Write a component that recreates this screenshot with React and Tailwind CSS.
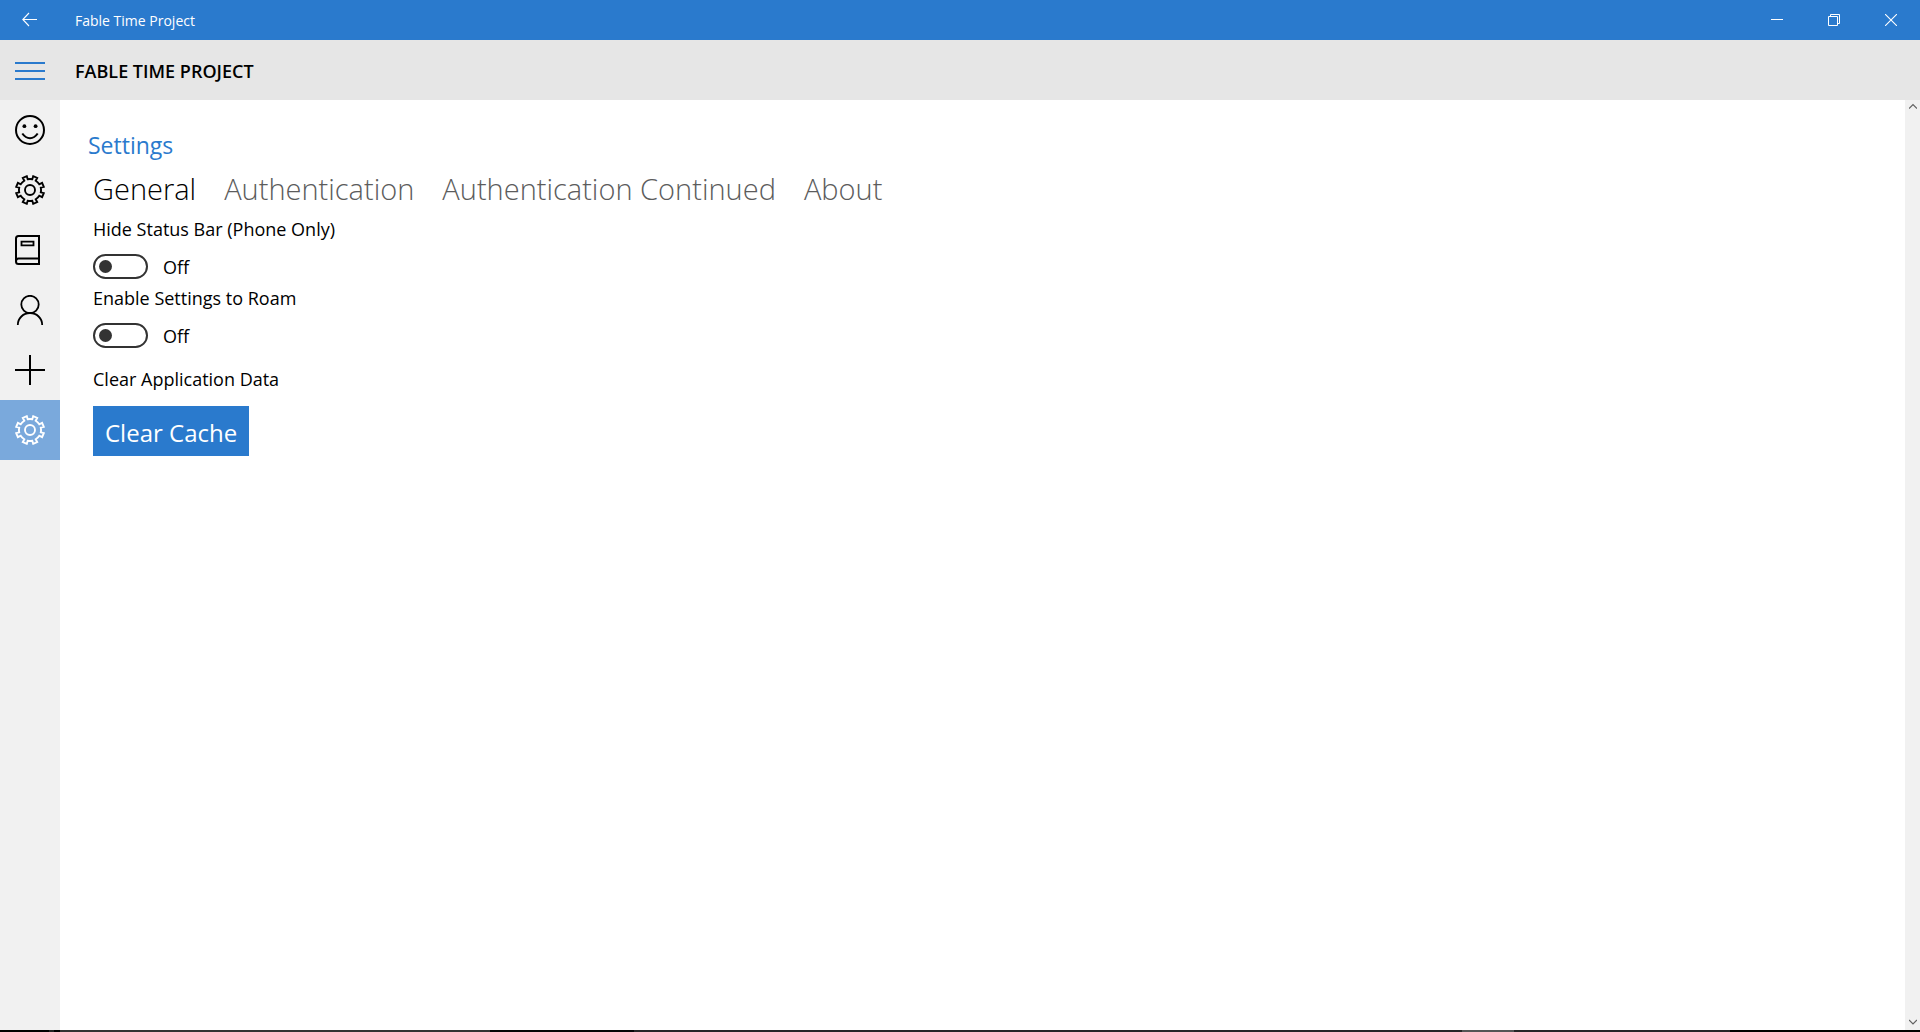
import React, { useState } from "react";

const TABS = ["General", "Authentication", "Authentication Continued", "About"];

function Icon({ children, size = 30, className = "" }) {
  return (
    <svg
      width={size}
      height={size}
      viewBox={`0 0 ${size} ${size}`}
      fill="none"
      stroke="currentColor"
      strokeWidth="2"
      className={className}
      aria-hidden="true"
    >
      {children}
    </svg>
  );
}

function Gear() {
  return (
    <Icon>
      <g strokeWidth="1.9">
        <path d="M12.7 4.2 L11.8 1.2 L7.8 2.9 L9.3 5.7 A11 11 0 0 0 5.7 9.3 L2.9 7.8 L1.2 11.8 L4.2 12.7 A11 11 0 0 0 4.2 17.3 L1.2 18.2 L2.9 22.2 L5.7 20.7 A11 11 0 0 0 9.3 24.3 L7.8 27.1 L11.8 28.8 L12.7 25.8 A11 11 0 0 0 17.3 25.8 L18.2 28.8 L22.2 27.1 L20.7 24.3 A11 11 0 0 0 24.3 20.7 L27.1 22.2 L28.8 18.2 L25.8 17.3 A11 11 0 0 0 25.8 12.7 L28.8 11.8 L27.1 7.8 L24.3 9.3 A11 11 0 0 0 20.7 5.7 L22.2 2.9 L18.2 1.2 L17.3 4.2 A11 11 0 0 0 12.7 4.2 Z" />
        <circle cx="15" cy="15" r="5" />
      </g>
    </Icon>
  );
}

function Smile() {
  return (
    <Icon>
      <circle cx="15" cy="15" r="14" />
      <circle cx="9.4" cy="11.2" r="1.9" fill="currentColor" stroke="none" />
      <circle cx="20.6" cy="11.2" r="1.9" fill="currentColor" stroke="none" />
      <path d="M7.3 18.5 Q10.5 23.2 15 23.2 T22.7 18.5" />
    </Icon>
  );
}

function Book() {
  return (
    <Icon>
      <path d="M24 1 H3.5 Q1 1 1 3.5 V26.5 Q1 29 3.5 29 H24 Z M24 23.5 H3.5 Q1 23.5 1 26.5" />
      <path d="M6.5 6.7 H18.5 V10.3 H6.5 Z" strokeWidth="1.8" />
    </Icon>
  );
}

function Person() {
  return (
    <Icon>
      <circle cx="15" cy="9.5" r="8.7" strokeWidth="1.8" />
      <path d="M2.8 30 A12.2 12 0 0 1 27.2 30" strokeWidth="1.8" />
    </Icon>
  );
}

function Plus() {
  return (
    <Icon>
      <path d="M15 0 V30 M0 15 H30" />
    </Icon>
  );
}

const NAV = [
  { label: "Feedback", Glyph: Smile },
  { label: "Options", Glyph: Gear },
  { label: "Library", Glyph: Book },
  { label: "Account", Glyph: Person },
  { label: "Add", Glyph: Plus },
  { label: "Settings", Glyph: Gear, active: true },
];

function Toggle({ id, label }) {
  const [on, setOn] = useState(false);
  return (
    <div>
      <label htmlFor={id} className="block text-lg leading-6">
        {label}
      </label>
      <div className="mt-[13px] flex h-[25px] items-center gap-[15px]">
        <span className="relative flex">
          <input
            id={id}
            type="checkbox"
            role="switch"
            checked={on}
            onChange={(e) => setOn(e.target.checked)}
            className="peer h-[25px] w-[55px] appearance-none rounded-full border-2 border-[#333] checked:border-[#2a7acd] checked:bg-[#2a7acd]"
          />
          <span className="pointer-events-none absolute top-1.5 left-1.5 size-[13px] rounded-full bg-[#333] peer-checked:right-1.5 peer-checked:left-auto peer-checked:bg-white" />
        </span>
        <span className="text-lg leading-6">{on ? "On" : "Off"}</span>
      </div>
    </div>
  );
}

const STRIP = [
  ["49fr", "#000"],
  ["5fr", "#222"],
  ["6fr", "#000"],
  ["430fr", "#333"],
  ["144fr", "#050505"],
  ["828fr", "#262626"],
  ["52fr", "#555"],
  ["216fr", "#262626"],
  ["190fr", "#000"],
];

export default function App() {
  const [tab, setTab] = useState("General");
  return (
    <div className="flex h-screen flex-col bg-white font-['Open_Sans','Noto_Sans',sans-serif] text-black">
      <header className="flex h-10 shrink-0 items-center bg-[#2a7acd] text-white">
        <button aria-label="Back" className="flex h-10 w-[60px] items-center justify-center">
          <Icon size={16}>
            <path d="M15 7.5 H1 M7 1 L0.8 7.5 L7 14" strokeWidth="1.1" />
          </Icon>
        </button>
        <span className="ml-[15px] pt-0.5 text-sm">Fable Time Project</span>
        <div className="ml-auto flex gap-px pr-px">
          <button aria-label="Minimize" className="flex h-10 w-14 items-center justify-center">
            <Icon size={12}>
              <path d="M0 5.5 H12" strokeWidth="1" />
            </Icon>
          </button>
          <button aria-label="Restore" className="flex h-10 w-14 items-center justify-center">
            <Icon size={12}>
              <path d="M0.5 2.5 H9.5 V11.5 H0.5 Z M2.5 2.5 V0.5 H11.5 V9.5 H9.5" strokeWidth="1" />
            </Icon>
          </button>
          <button aria-label="Close" className="flex h-10 w-14 items-center justify-center">
            <Icon size={12}>
              <path d="M0 0 L12 12 M12 0 L0 12" strokeWidth="1.1" />
            </Icon>
          </button>
        </div>
      </header>

      <div className="flex h-[60px] shrink-0 items-center bg-[#e6e6e6]">
        <button aria-label="Menu" className="flex h-[60px] w-[60px] items-center justify-center text-[#2a7acd]">
          <Icon>
            <path d="M0 8 H30 M0 16 H30 M0 24 H30" />
          </Icon>
        </button>
        <h1 className="ml-[15px] pt-0.5 text-lg font-semibold">FABLE TIME PROJECT</h1>
      </div>

      <div className="flex min-h-0 flex-1">
        <nav className="flex w-[60px] shrink-0 flex-col bg-[#f1f1f1]">
          {NAV.map(({ label, Glyph, active }) => (
            <button
              key={label}
              aria-label={label}
              className={
                active
                  ? "flex h-[60px] items-center justify-center bg-[#7aa9dc] text-white"
                  : "flex h-[60px] items-center justify-center"
              }
            >
              <Glyph />
            </button>
          ))}
        </nav>

        <main className="flex-1 px-7 pt-7">
          <h2 className="text-[23px] leading-[34px] text-[#2a7acd]">Settings</h2>
          <div role="tablist" className="ml-[5px] flex h-[54px] items-center gap-7 text-[29px] font-light">
            {TABS.map((name) => (
              <button
                key={name}
                role="tab"
                aria-selected={tab === name}
                onClick={() => setTab(name)}
                className={tab === name ? "text-black" : "text-[#5c5c5c]"}
              >
                {name}
              </button>
            ))}
          </div>
          <div className="mt-px ml-[5px] flex flex-col items-start gap-[7px]">
            <Toggle id="hide-status" label="Hide Status Bar (Phone Only)" />
            <Toggle id="roam" label="Enable Settings to Roam" />
            <div className="mt-3">
              <p className="text-lg leading-6">Clear Application Data</p>
              <button className="mt-[15px] h-[50px] bg-[#2a7acd] px-3 pt-1 text-2xl text-white">
                Clear Cache
              </button>
            </div>
          </div>
        </main>

        <div className="flex w-[15px] shrink-0 flex-col items-center justify-between bg-[#f1f1f1] pt-[3px] pb-1 text-[#606060]">
          <button aria-label="Scroll up">
            <Icon size={8}>
              <path d="M0 5.5 L4 1.5 L8 5.5" strokeWidth="1.2" />
            </Icon>
          </button>
          <button aria-label="Scroll down">
            <Icon size={8}>
              <path d="M0 2 L4 6 L8 2" strokeWidth="1.2" />
            </Icon>
          </button>
        </div>
      </div>

      <div
        className="grid h-0.5 shrink-0"
        style={{ gridTemplateColumns: STRIP.map(([w]) => w).join(" ") }}
      >
        {STRIP.map(([, color], i) => (
          <div key={i} style={{ backgroundColor: color }} />
        ))}
      </div>
    </div>
  );
}
